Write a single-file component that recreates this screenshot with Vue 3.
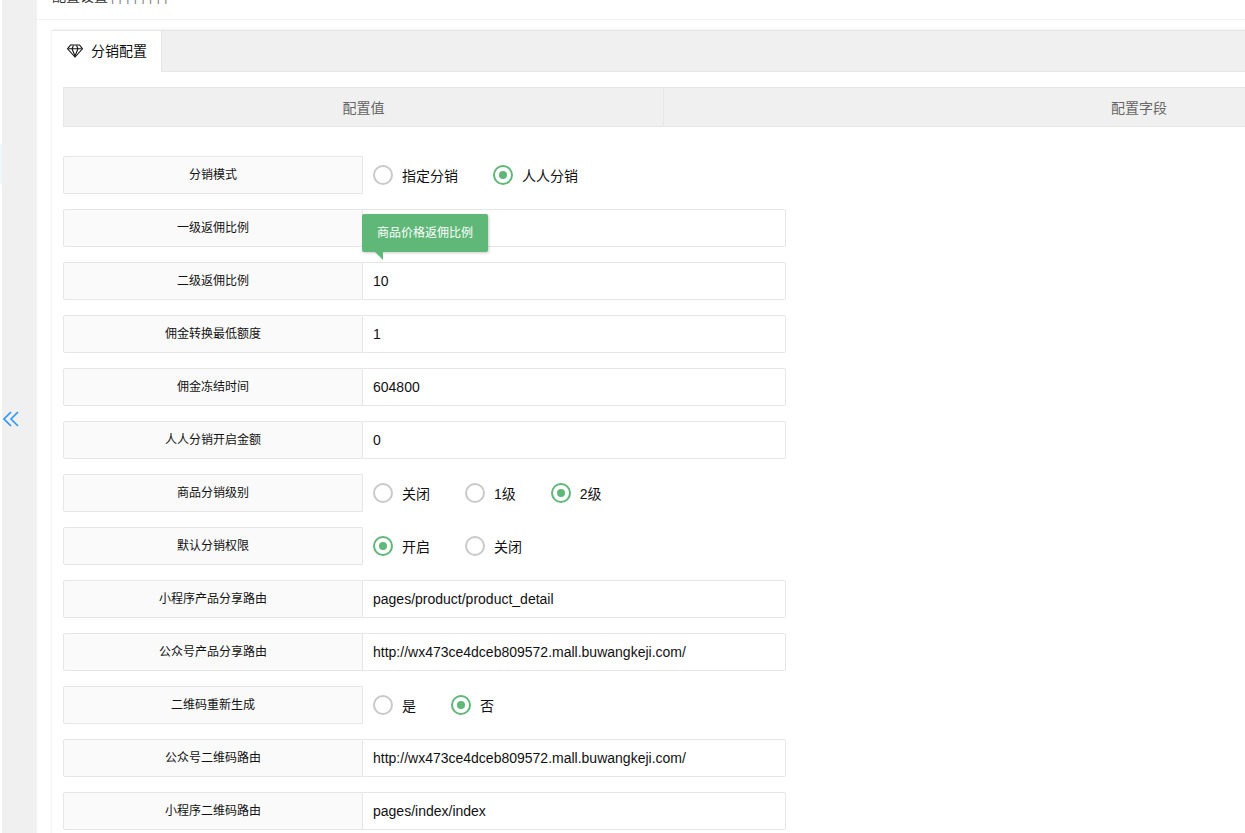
<template>
  <div class="page">
    <div class="side-strip">
      <span class="side-active"></span>
      <svg class="collapse" width="16" height="16" viewBox="0 0 16 16" fill="none" stroke="#2d96f5" stroke-width="1.6">
        <path d="M8 1 L1 8 L8 15" />
        <path d="M15 1 L8 8 L15 15" />
      </svg>
    </div>
    <div class="main">
      <div class="head">
        <div class="head-title">配置设置<span class="crumbs">||||||||</span></div>
      </div>
      <div class="tabs-box">
        <div class="tab-bar">
          <div class="tab">
            <svg width="16" height="14" viewBox="0 0 16 14" fill="none" stroke="#111" stroke-width="1.1">
              <path d="M3.5 1 H12.5 L15.5 4.8 L8 13 L0.5 4.8 Z" />
              <path d="M1.5 4.8 H14.5 M5 4.8 L8 12 L11 4.8 M5 4.8 L6.5 1.5 M11 4.8 L9.5 1.5" />
            </svg>
            <span class="tab-text">分销配置</span>
          </div>
        </div>
        <div class="tab-body">
          <div class="table-head">
            <div class="th th-value">配置值</div>
            <div class="th th-field">配置字段</div>
          </div>
          <div class="form">
            <div v-for="row in rows" :key="row.label" class="row" :class="{ 'row-radio': row.options }">
              <div class="label">{{ row.label }}</div>
              <div v-if="row.options" class="radios">
                <label v-for="(opt, i) in row.options" :key="opt" class="radio">
                  <span class="dot" :class="{ on: i === row.checked }"></span>
                  <span>{{ opt }}</span>
                </label>
              </div>
              <div v-else class="input">{{ row.value }}</div>
              <div v-if="row.tip" class="tip">{{ row.tip }}</div>
            </div>
          </div>
        </div>
      </div>
    </div>
  </div>
</template>

<script setup>
// 分销配置表单数据
const rows = [
  { label: '分销模式', options: ['指定分销', '人人分销'], checked: 1 },
  { label: '一级返佣比例', value: '', tip: '商品价格返佣比例' },
  { label: '二级返佣比例', value: '10' },
  { label: '佣金转换最低额度', value: '1' },
  { label: '佣金冻结时间', value: '604800' },
  { label: '人人分销开启金额', value: '0' },
  { label: '商品分销级别', options: ['关闭', '1级', '2级'], checked: 2 },
  { label: '默认分销权限', options: ['开启', '关闭'], checked: 0 },
  { label: '小程序产品分享路由', value: 'pages/product/product_detail' },
  { label: '公众号产品分享路由', value: 'http://wx473ce4dceb809572.mall.buwangkeji.com/' },
  { label: '二维码重新生成', options: ['是', '否'], checked: 1 },
  { label: '公众号二维码路由', value: 'http://wx473ce4dceb809572.mall.buwangkeji.com/' },
  { label: '小程序二维码路由', value: 'pages/index/index' }
]
</script>

<style>
html, body {
  margin: 0;
  height: 100%;
  overflow: hidden;
  background: #fff;
}
</style>

<style scoped>
.page {
  display: flex;
  height: 833px;
  overflow: hidden;
  padding-left: 2px;
  box-sizing: border-box;
  font-family: "Liberation Sans", "Noto Sans CJK SC", sans-serif;
  font-size: 14px;
  color: #111;
}

.side-strip {
  position: relative;
  flex: none;
  width: 35px;
  background: #f0f0f0;
}

.side-active {
  position: absolute;
  left: -2px;
  top: 144px;
  width: 2px;
  height: 40px;
  background: #eef6fd;
}

.collapse {
  position: absolute;
  left: 1px;
  top: 411px;
}

.main {
  flex: 1;
  min-width: 0;
  overflow: hidden;
}

/* le titre est coupé par le haut de la fenêtre */
.head {
  display: flow-root;
  height: 19px;
  padding-left: 15px;
  border-bottom: 1px solid #f3f3f3;
}

.head-title {
  margin-top: -13px;
  line-height: 19px;
  color: #333;
}

.crumbs {
  letter-spacing: 4.5px;
  font-size: 12px;
  margin-left: 3px;
  color: #777;
}

.tabs-box {
  margin: 10px 0 0 15px;
  width: 1230px;
  box-shadow: 0 0 3px rgba(0, 0, 0, 0.12);
  border-radius: 2px 0 0 0;
}

.tab-bar {
  height: 40px;
  background: #f0f0f0;
  border-top: 1px solid #e6e6e6;
  border-bottom: 1px solid #e6e6e6;
}

.tab {
  display: flex;
  align-items: center;
  gap: 8px;
  box-sizing: border-box;
  width: 110px;
  height: 41px;
  padding-left: 15px;
  padding-bottom: 2px;
  background: #fff;
  border-right: 1px solid #e6e6e6;
}

.tab-text {
  margin-top: -2px;
}

.tab-body {
  padding: 15px 0 60px 11px;
  background: #fff;
}

.table-head {
  display: flex;
  height: 40px;
  box-sizing: border-box;
  background: #f0f0f0;
  border: 1px solid #e6e6e6;
  border-right: 0;
  color: #666;
}

.th {
  display: flex;
  flex: none;
  align-items: center;
  justify-content: center;
  box-sizing: border-box;
}

.th-value {
  width: 600px;
  border-right: 1px solid #e6e6e6;
}

/* la colonne dépasse à droite de la fenêtre */
.th-field {
  width: 950px;
}

.form {
  display: flex;
  flex-direction: column;
  gap: 15px;
  padding-top: 29px;
}

.row {
  position: relative;
  display: flex;
  width: 723px;
  height: 38px;
  box-sizing: border-box;
}

.label {
  flex: none;
  display: flex;
  align-items: center;
  justify-content: center;
  box-sizing: border-box;
  width: 300px;
  height: 38px;
  padding-bottom: 4px;
  background: #fafafa;
  border: 1px solid #e6e6e6;
  border-radius: 2px 0 0 2px;
  font-size: 12px;
}

.input {
  flex: 1;
  box-sizing: border-box;
  height: 38px;
  line-height: 36px;
  padding-left: 10px;
  border: 1px solid #e6e6e6;
  border-left: 0;
  border-radius: 0 2px 2px 0;
  color: #111;
}

.radios {
  display: flex;
  align-items: center;
  gap: 35px;
  padding-left: 10px;
}

.radio {
  display: flex;
  align-items: center;
  gap: 9px;
}

.dot {
  position: relative;
  display: block;
  box-sizing: border-box;
  width: 20px;
  height: 20px;
  border: 2px solid #c9c9c9;
  border-radius: 50%;
}

.dot.on {
  border-color: #5fb878;
}

.dot.on::after {
  content: "";
  position: absolute;
  left: 4px;
  top: 4px;
  width: 8px;
  height: 8px;
  border-radius: 50%;
  background: #5fb878;
}

.tip {
  position: absolute;
  left: 299px;
  top: 5px;
  box-sizing: border-box;
  width: 126px;
  height: 38px;
  line-height: 38px;
  text-align: center;
  font-size: 12px;
  color: #fff;
  background: #5fb878;
  border-radius: 2px;
  box-shadow: 1px 1px 3px rgba(0, 0, 0, 0.2);
}

.tip::after {
  content: "";
  position: absolute;
  left: 13px;
  top: 38px;
  border-style: solid;
  border-width: 0 8px 8px 0;
  border-color: transparent #5fb878 transparent transparent;
}
</style>
